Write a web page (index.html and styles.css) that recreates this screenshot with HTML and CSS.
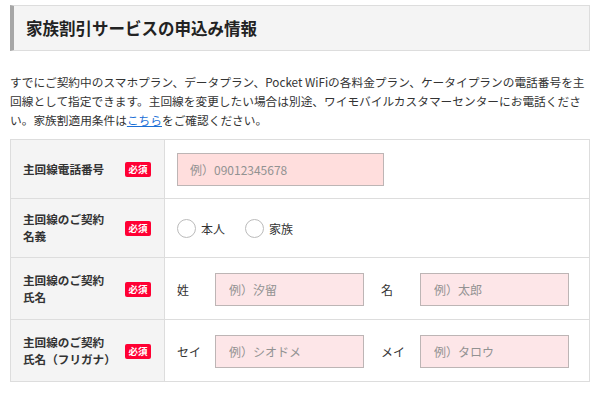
FILE: index.html
```html
<!DOCTYPE html>
<html lang="ja">
<head>
  <meta charset="UTF-8">
  <title>家族割引サービスの申込み情報</title>
  <link rel="stylesheet" href="styles.css">
</head>
<body>
  <h2 class="section-title">家族割引サービスの申込み情報</h2>
  <p class="lead">すでにご契約中のスマホプラン、データプラン、Pocket WiFiの各料金プラン、ケータイプランの電話番号を主回線として指定できます。主回線を変更したい場合は別途、ワイモバイルカスタマーセンターにお電話ください。家族割適用条件は<a href="#">こちら</a>をご確認ください。</p>

  <table class="form-table">
    <tr class="row-tel">
      <th>
        <div class="th-inner">
          <span class="th-label">主回線電話番号</span>
          <span class="required">必須</span>
        </div>
      </th>
      <td>
        <input type="text" class="field field-tel field-active" placeholder="例）09012345678">
      </td>
    </tr>
    <tr>
      <th>
        <div class="th-inner">
          <span class="th-label">主回線のご契約名義</span>
          <span class="required">必須</span>
        </div>
      </th>
      <td>
        <div class="radios">
          <label class="radio"><input type="radio" name="meigi"><span class="radio-mark"></span>本人</label>
          <label class="radio"><input type="radio" name="meigi"><span class="radio-mark"></span>家族</label>
        </div>
      </td>
    </tr>
    <tr class="row-name">
      <th>
        <div class="th-inner">
          <span class="th-label">主回線のご契約氏名</span>
          <span class="required">必須</span>
        </div>
      </th>
      <td>
        <div class="name-fields">
          <span class="name-label">姓</span>
          <input type="text" class="field field-name" placeholder="例）汐留">
          <span class="name-label name-label-second">名</span>
          <input type="text" class="field field-name" placeholder="例）太郎">
        </div>
      </td>
    </tr>
    <tr class="row-name">
      <th>
        <div class="th-inner">
          <span class="th-label">主回線のご契約氏名（フリガナ）</span>
          <span class="required">必須</span>
        </div>
      </th>
      <td>
        <div class="name-fields">
          <span class="name-label">セイ</span>
          <input type="text" class="field field-name" placeholder="例）シオドメ">
          <span class="name-label name-label-second">メイ</span>
          <input type="text" class="field field-name" placeholder="例）タロウ">
        </div>
      </td>
    </tr>
  </table>
</body>
</html>
```

FILE: styles.css
```css
body {
  margin: 5px 10px;
  font-family: "Noto Sans CJK JP", "Noto Sans", sans-serif;
  color: #333;
  background: #fff;
}
.section-title {
  margin: 0;
  height: 44px;
  padding-left: 12px;
  display: flex;
  align-items: center;
  font-size: 16.5px;
  font-weight: bold;
  color: #222;
  background: #f4f4f4;
  border: 1px solid #ddd;
  border-left: 4px solid #a6a6a6;
}
.lead {
  margin: 21px 0 10px;
  font-size: 11.7px;
  line-height: 19px;
  color: #333;
}
.lead a {
  color: #1a6fd6;
  text-decoration: underline;
}
.form-table {
  width: 100%;
  border-collapse: collapse;
  border: 1px solid #ddd;
}
.form-table th,
.form-table td {
  border: 1px solid #ddd;
  padding: 12px 13px 12px 12px;
  vertical-align: middle;
  text-align: left;
}
.form-table th {
  width: 125px;
  background: #f4f4f4;
  font-weight: normal;
}
.row-tel td {
  padding-top: 13px;
}
.row-name th,
.row-name td {
  padding-top: 14px;
  padding-bottom: 13px;
}
.th-inner {
  display: flex;
  align-items: center;
}
.th-label {
  width: 102px;
  padding-right: 10px;
  box-sizing: border-box;
  font-size: 11.6px;
  font-weight: bold;
  line-height: 17px;
  color: #333;
}
.required {
  width: 26px;
  height: 15px;
  border-radius: 2px;
  background: #ff0033;
  color: #fff;
  font-size: 9.5px;
  font-weight: bold;
  line-height: 15px;
  text-align: center;
}
.field {
  display: block;
  box-sizing: border-box;
  height: 33px;
  padding: 0 12px;
  border: 1px solid #bdb5b5;
  background: #fde6e8;
  font-family: "Noto Sans CJK JP", sans-serif;
  font-size: 12px;
  color: #333;
  outline: none;
}
.field::placeholder {
  color: #929292;
}
.field-active {
  background: #ffdedd;
}
.field-tel {
  width: 207px;
}
.field-name {
  width: 149px;
  padding-left: 13px;
}
.radios {
  display: flex;
  gap: 20px;
}
.radio {
  display: flex;
  align-items: center;
  font-size: 12px;
  color: #333;
  cursor: pointer;
}
.radio input {
  display: none;
}
.radio-mark {
  width: 19px;
  height: 19px;
  box-sizing: border-box;
  border: 1.5px solid #bbb;
  border-radius: 50%;
  background: #fff;
  margin-right: 5px;
}
.name-fields {
  display: flex;
  align-items: center;
}
.name-label {
  width: 38px;
  font-size: 12px;
  color: #333;
}
.name-label-second {
  margin-left: 17px;
  width: 39px;
}
```
